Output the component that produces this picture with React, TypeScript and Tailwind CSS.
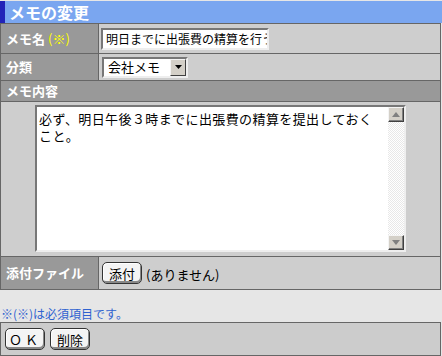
import React from 'react'

const FONT = { fontFamily: '"MS PGothic", "Noto Sans CJK JP", sans-serif' }

function OldButton({ label, className = '' }: { label: string; className?: string }) {
  return (
    <button
      className={`flex items-center justify-center rounded-[5px] border border-[#333] bg-[#f4f4f4] text-[13px] leading-none text-black shadow-[inset_-1px_-2px_0_#888,inset_1px_1px_0_#fff] ${className}`}
    >
      {label}
    </button>
  )
}

function ArrowBox({ up }: { up?: boolean }) {
  return (
    <div className="flex h-[15px] w-[16px] items-center justify-center border border-t-[#f4f4f4] border-l-[#f4f4f4] border-r-[#404040] border-b-[#404040] bg-[#d4d0c8] shadow-[inset_-1px_-1px_0_#808080]">
      <svg width="8" height="5" viewBox="0 0 8 5">
        {up ? <path d="M4 0 L8 5 L0 5 Z" fill="#808080" /> : <path d="M0 0 L8 0 L4 5 Z" fill="#808080" />}
      </svg>
    </div>
  )
}

export default function App() {
  return (
    <div className="h-[356px] w-[442px] bg-[#e6e6e6] text-black" style={FONT}>
      {/* title bar */}
      <div className="pt-px">
        <div className="flex h-[22px] items-center bg-[#7aa6f0]">
          <div className="h-full w-[5px] bg-[#2222b8]" />
          <span className="ml-[4px] text-[16px] font-bold text-white">メモの変更</span>
        </div>
      </div>

      {/* form table */}
      <div className="w-[441px] border border-t-0 border-[#666] bg-[#cecece]">
        <div className="flex h-[30px] border-t border-[#666]">
          <div className="flex w-[98px] items-center border-r border-[#666] bg-[#999] pl-[5px] text-[13px] font-bold text-white">
            メモ名<span className="ml-[3px] font-normal text-[#ffff00]">(※)</span>
          </div>
          <div className="flex flex-1 items-center pl-[2px]">
            <div className="h-[22px] w-[168px] overflow-hidden whitespace-nowrap border-2 border-t-[#777] border-l-[#777] border-r-[#eee] border-b-[#eee] bg-white pl-[3px] text-[12px] leading-[18px]">
              明日までに出張費の精算を行う
            </div>
          </div>
        </div>

        <div className="flex h-[27px] border-t border-[#666]">
          <div className="flex w-[98px] items-center border-r border-[#666] bg-[#999] pl-[5px] text-[13px] font-bold text-white">
            分類
          </div>
          <div className="flex flex-1 items-center pl-[3px]">
            <div className="flex h-[21px] w-[86px] items-center border-2 border-t-[#777] border-l-[#777] border-r-[#eee] border-b-[#eee] bg-white">
              <span className="flex-1 pl-[4px] text-[13px]">会社メモ</span>
              <div className="flex h-full w-[16px] items-center justify-center border border-t-[#f4f4f4] border-l-[#f4f4f4] border-r-[#404040] border-b-[#404040] bg-[#d4d0c8]">
                <svg width="7" height="4" viewBox="0 0 7 4">
                  <path d="M0 0 L7 0 L3.5 4 Z" fill="#000" />
                </svg>
              </div>
            </div>
          </div>
        </div>

        <div className="flex h-[21px] items-center border-t border-[#666] bg-[#999] pl-[5px] text-[13px] font-bold text-white">
          メモ内容
        </div>

        <div className="flex h-[155px] border-t border-[#666] pt-[3px] pl-[34px]">
          <div className="flex h-[147px] w-[371px] border-2 border-t-[#777] border-l-[#777] border-r-[#eee] border-b-[#eee] bg-white">
            <div className="flex-1 pl-[2px] pr-[4px] pt-[3px] text-[13px] leading-[17px] tracking-[0.4px]">
              必ず、明日午後３時までに出張費の精算を提出しておくこと。
            </div>
            <div className="flex w-[16px] flex-col justify-between bg-[repeating-conic-gradient(#e8e8e8_0_25%,#fff_0_50%)] bg-[length:2px_2px]">
              <ArrowBox up />
              <ArrowBox />
            </div>
          </div>
        </div>

        <div className="flex h-[33px] border-t border-[#666]">
          <div className="flex w-[98px] items-center border-r border-[#666] bg-[#999] pl-[5px] text-[13px] font-bold text-white">
            添付ファイル
          </div>
          <div className="flex flex-1 items-center gap-[4px] pl-[3px]">
            <OldButton label="添付" className="h-[22px] w-[40px]" />
            <span className="mt-[4px] text-[13px]">(ありません)</span>
          </div>
        </div>
      </div>

      <div className="mt-[16px] pl-px text-[12px] leading-[16px] text-[#2f62d0]">※(※)は必須項目です。</div>

      <div className="flex h-[34px] w-[441px] items-center gap-[5px] border border-[#666] bg-[#cccccc] pl-[4px]">
        <OldButton label="ＯＫ" className="h-[22px] w-[40px] tracking-[3px]" />
        <OldButton label="削除" className="h-[22px] w-[40px]" />
      </div>
    </div>
  )
}
